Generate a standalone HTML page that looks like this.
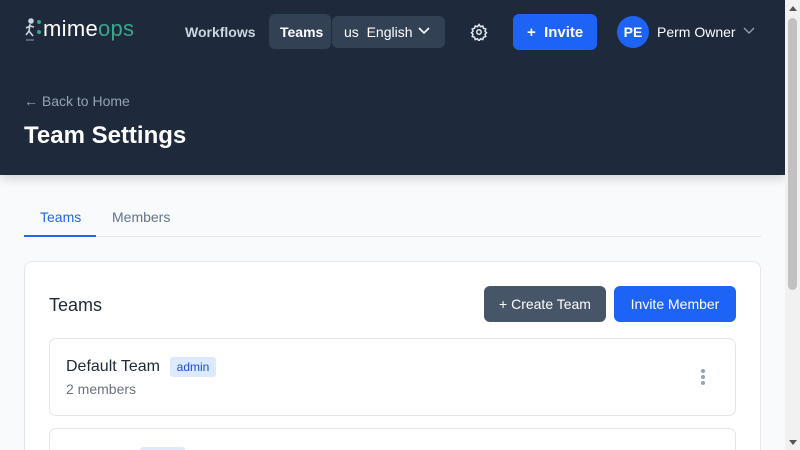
<!DOCTYPE html>
<html><head><meta charset="utf-8"><style>
*{box-sizing:border-box;margin:0;padding:0}
html{width:800px;height:450px;overflow:hidden}
body{width:800px;height:450px;overflow:hidden;background:#f8fafc;font-family:"Liberation Sans",sans-serif;position:relative}
.hdr{position:absolute;left:0;top:0;width:785px;height:175px;background:#1e293b;box-shadow:0 4px 10px rgba(0,0,0,.15)}
.t{position:absolute;white-space:nowrap}
.sb{position:absolute;right:0;top:0;width:15px;height:450px;background:#f1f1f1}
</style></head><body>
<div class="hdr">
 <svg style="position:absolute;left:24px;top:18px" width="12" height="26" viewBox="0 0 12 26" fill="none" stroke="#cbd5e1" stroke-width="1.6"><circle cx="7" cy="3" r="2" fill="#cbd5e1"/><path d="M6 6l-1 7 4 5M5 13l-3 4M6 8l-4 2M6 8l4 1"/><path d="M2 22h8" stroke="#64748b"/></svg>
 <div class="t" style="left:37px;top:20px;width:4px;height:14px;border-left:4px dotted #3aa68c"></div>
 <div class="t" style="left:43px;top:16px;font-size:22px;color:#fff;letter-spacing:.3px">mime<span style="color:#3aa68c">ops</span></div>
 <div class="t" style="left:185px;top:24px;font-size:14px;font-weight:bold;color:#cbd5e1">Workflows</div>
 <div style="position:absolute;left:269px;top:14px;width:62px;height:35px;background:#334155;border-radius:6px"></div>
 <div class="t" style="left:280px;top:24px;font-size:14px;font-weight:bold;color:#fff">Teams</div>
 <div style="position:absolute;left:332px;top:16px;width:113px;height:32px;background:#334155;border-radius:6px"></div>
 <div class="t" style="left:344px;top:24px;font-size:14px;color:#fff">us&nbsp; English</div>
 <svg style="position:absolute;left:418px;top:26px" width="12" height="10"><path d="M1 2l5 5 5-5" fill="none" stroke="#fff" stroke-width="1.6"/></svg>
 <svg style="position:absolute;left:470px;top:23px" width="18" height="18" viewBox="0 0 24 24" fill="none" stroke="#e2e8f0" stroke-width="2"><circle cx="12" cy="12" r="3"/><path d="M12 2l2 3 3-1 1 3 3 1-1 3 2 2-2 2 1 3-3 1-1 3-3-1-2 3-2-3-3 1-1-3-3-1 1-3-2-2 2-2-1-3 3-1 1-3 3 1z"/></svg>
 <div style="position:absolute;left:513px;top:14px;width:84px;height:36px;background:#1d63f5;border-radius:6px"></div>
 <div class="t" style="left:527px;top:24px;font-size:15px;font-weight:bold;color:#fff">+&nbsp;&nbsp;Invite</div>
 <div style="position:absolute;left:617px;top:16px;width:32px;height:32px;background:#1d63f5;border-radius:50%;color:#fff;font-weight:bold;font-size:14px;text-align:center;line-height:32px">PE</div>
 <div class="t" style="left:657px;top:24px;font-size:14px;color:#fff">Perm Owner</div>
 <svg style="position:absolute;left:743px;top:27px" width="12" height="8"><path d="M1 1l5 5 5-5" fill="none" stroke="#94a3b8" stroke-width="1.3"/></svg>
 <div class="t" style="left:24px;top:93px;font-size:14px;color:#94a3b8">← Back to Home</div>
 <div class="t" style="left:24px;top:122px;font-size:24px;font-weight:bold;color:#fff">Team Settings</div>
</div>
<div class="t" style="left:40px;top:209px;font-size:14px;color:#2563eb">Teams</div>
<div class="t" style="left:112px;top:209px;font-size:14px;color:#64748b">Members</div>
<div style="position:absolute;left:24px;top:236px;width:737px;height:1px;background:#e2e8f0"></div>
<div style="position:absolute;left:24px;top:235px;width:72px;height:2px;background:#2563eb"></div>
<div style="position:absolute;left:24px;top:261px;width:737px;height:200px;background:#fff;border:1px solid #e5e7eb;border-radius:8px"></div>
<div class="t" style="left:49px;top:295px;font-size:18px;color:#1f2937">Teams</div>
<div style="position:absolute;left:484px;top:286px;width:122px;height:36px;background:#475569;border-radius:6px;color:#fff;font-size:14px;text-align:center;line-height:36px">+ Create Team</div>
<div style="position:absolute;left:614px;top:286px;width:122px;height:36px;background:#1d63f5;border-radius:6px;color:#fff;font-size:14px;text-align:center;line-height:36px">Invite Member</div>
<div style="position:absolute;left:49px;top:338px;width:687px;height:78px;background:#fff;border:1px solid #e5e7eb;border-radius:7px"></div>
<div class="t" style="left:66px;top:358px;font-size:16px;color:#1f2937">Default Team</div>
<div style="position:absolute;left:170px;top:357px;width:46px;height:20px;background:#dbeafe;border-radius:3px;color:#1d4ed8;font-size:12px;text-align:center;line-height:20px">admin</div>
<div class="t" style="left:66px;top:381px;font-size:14px;color:#6b7280">2 members</div>
<div style="position:absolute;left:701px;top:369px;width:4px;height:4px;border-radius:50%;background:#94a3b8;box-shadow:0 6px 0 #94a3b8,0 12px 0 #94a3b8"></div>
<div style="position:absolute;left:49px;top:428px;width:687px;height:40px;background:#fff;border:1px solid #e5e7eb;border-radius:7px"></div>
<div style="position:absolute;left:140px;top:447px;width:45px;height:10px;background:#dbeafe;border-radius:3px"></div>
<div class="sb"><div style="position:absolute;left:3px;top:18px;width:9px;height:272px;background:#c1c1c1;border-radius:5px"></div>
<div style="position:absolute;left:4px;top:6px;border:4px solid transparent;border-bottom:5px solid #555;border-top:0"></div>
<div style="position:absolute;left:4px;top:440px;border:4px solid transparent;border-top:5px solid #555;border-bottom:0"></div></div>
</body></html>
